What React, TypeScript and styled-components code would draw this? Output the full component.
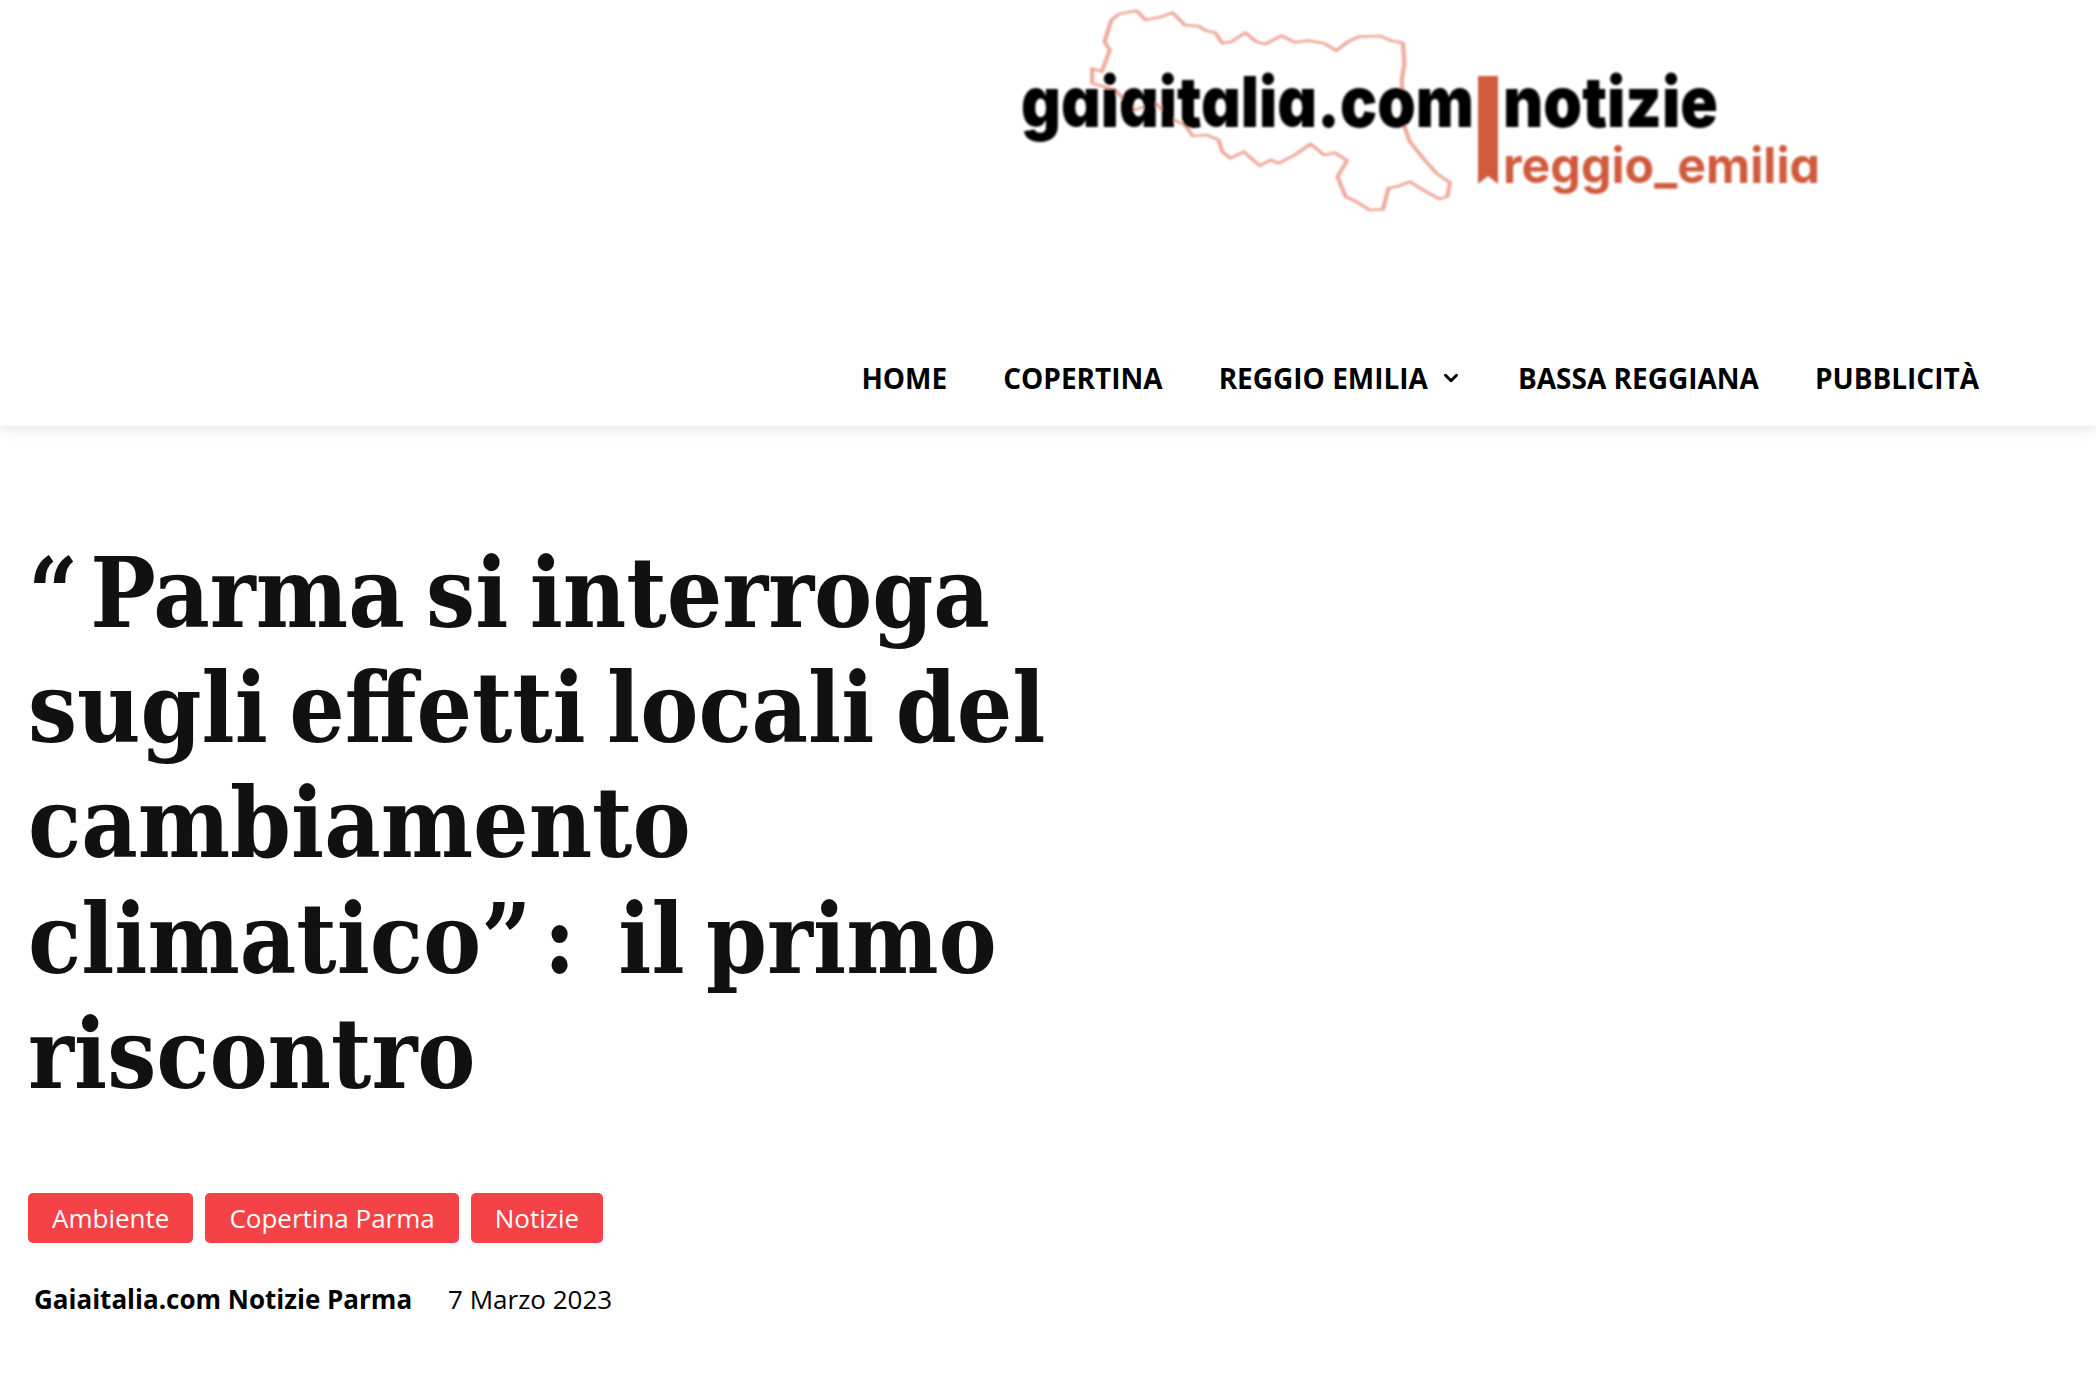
import React from "react";
import styled, { createGlobalStyle } from "styled-components";
import { ChevronDown } from "lucide-react";

const Global = createGlobalStyle`
  html, body { margin: 0; padding: 0; background: #fff; }
  body { font-family: "Open Sans", "Liberation Sans", sans-serif; color: #000; }
`;

const Page = styled.div`
  width: 2096px;
  min-height: 1400px;
  background: #fff;
`;

const Header = styled.header`
  display: flex;
  flex-direction: column;
  height: 426px;
  box-shadow: 0 2px 14px rgba(0, 0, 0, 0.13);
`;

const LogoRow = styled.div`
  display: flex;
  justify-content: flex-end;
  padding-right: 256px;
`;

const LogoSvg = styled.svg`
  display: block;
  width: 840px;
  height: 230px;
`;

const Nav = styled.nav`
  display: flex;
  justify-content: flex-end;
  align-items: center;
  gap: 56px;
  height: 60px;
  margin-top: 118px;
  padding-right: 117px;
`;

const NavItem = styled.a`
  display: flex;
  align-items: center;
  gap: 12px;
  font-size: 28px;
  font-weight: 700;
  line-height: 40px;
  color: #000;
`;

const Main = styled.main`
  padding: 0 0 0 28px;
`;

const Title = styled.h1`
  width: 1080px;
  margin: 0;
  padding-top: 110px;
  font-family: "DejaVu Serif Condensed", "DejaVu Serif", serif;
  font-size: 97px;
  font-weight: 700;
  line-height: 115.2px;
  word-spacing: -9px;
  color: #111;
`;

const Quote = styled.span`
  padding-right: 12px;
`;

const Tags = styled.div`
  display: flex;
  gap: 12px;
  margin-top: 81px;
`;

const Tag = styled.a`
  display: flex;
  align-items: center;
  height: 50px;
  padding: 0 24px;
  border-radius: 5px;
  background: #f44247;
  color: #fff;
  font-size: 26px;
`;

const Meta = styled.div`
  display: flex;
  gap: 36px;
  margin-top: 37px;
  padding-left: 6px;
  font-size: 26px;
  line-height: 38px;
`;

const Author = styled.span`
  font-weight: 700;
`;

const outline =
  "M222 42 L255 32 L272 60 L298 52 L322 38 L345 75 L370 78 L385 92 L402 98 L415 130 L432 125 L458 98 L478 125 L495 133 L525 107 L550 127 L575 122 L605 130 L628 152 L650 125 L670 110 L710 108 L730 122 L752 128 L755 190 L750 240 L755 380 L765 425 L790 475 L815 520 L840 548 L835 590 L820 597 L790 570 L765 545 L745 558 L725 565 L715 628 L690 630 L665 605 L645 590 L630 530 L648 482 L625 458 L605 465 L580 432 L550 465 L520 490 L505 480 L485 497 L455 455 L430 475 L415 455 L408 420 L385 405 L360 408 L345 375 L325 360 L290 310 L250 330 L215 270 L172 250 L172 205 L190 215 L205 150 L195 125 L208 60 Z";

const Logo = () => (
  <LogoSvg viewBox="0 0 840 230" role="img" aria-label="gaiaitalia.com notizie reggio_emilia">
    <defs>
      <filter id="soft" x="-5%" y="-5%" width="110%" height="110%">
        <feGaussianBlur stdDeviation="0.9" />
      </filter>
    </defs>
    <g filter="url(#soft)">
      <path
        d={outline}
        transform="scale(0.5357 0.3333)"
        fill="none"
        stroke="#eeab9c"
        strokeWidth="8"
        strokeLinejoin="round"
      />
      <path d="M478 76 H498 V184 L488 176 L478 184 Z" fill="#d05a3c" />
      <text
        x="21"
        y="127"
        fontFamily="Inter, sans-serif"
        fontWeight="900"
        fontSize="70"
        textLength="453"
        lengthAdjust="spacingAndGlyphs"
        fill="#000"
        style={{ fontFeatureSettings: '"cv11"' }}
      >
        gaiaitalia.com
      </text>
      <text
        x="503"
        y="127"
        fontFamily="Inter, sans-serif"
        fontWeight="900"
        fontSize="70"
        textLength="215"
        lengthAdjust="spacingAndGlyphs"
        fill="#000"
      >
        notizie
      </text>
      <text
        x="503"
        y="183"
        fontFamily="Inter, sans-serif"
        fontWeight="700"
        fontSize="50"
        textLength="317"
        lengthAdjust="spacingAndGlyphs"
        fill="#d05a3c"
        style={{ fontFeatureSettings: '"cv11"' }}
      >
        reggio_emilia
      </text>
    </g>
  </LogoSvg>
);

export default function App() {
  return (
    <Page>
      <Global />
      <Header>
        <LogoRow>
          <Logo />
        </LogoRow>
        <Nav>
          <NavItem>HOME</NavItem>
          <NavItem>COPERTINA</NavItem>
          <NavItem>
            REGGIO EMILIA
            <ChevronDown size={22} strokeWidth={3.2} />
          </NavItem>
          <NavItem>BASSA REGGIANA</NavItem>
          <NavItem>PUBBLICITÀ</NavItem>
        </Nav>
      </Header>
      <Main>
        <Title>
          <Quote>“</Quote>Parma si interroga sugli effetti locali del cambiamento climatico<Quote>”</Quote>:&nbsp; il primo
          riscontro
        </Title>
        <Tags>
          <Tag>Ambiente</Tag>
          <Tag>Copertina Parma</Tag>
          <Tag>Notizie</Tag>
        </Tags>
        <Meta>
          <Author>Gaiaitalia.com Notizie Parma</Author>
          <span>7 Marzo 2023</span>
        </Meta>
      </Main>
    </Page>
  );
}
